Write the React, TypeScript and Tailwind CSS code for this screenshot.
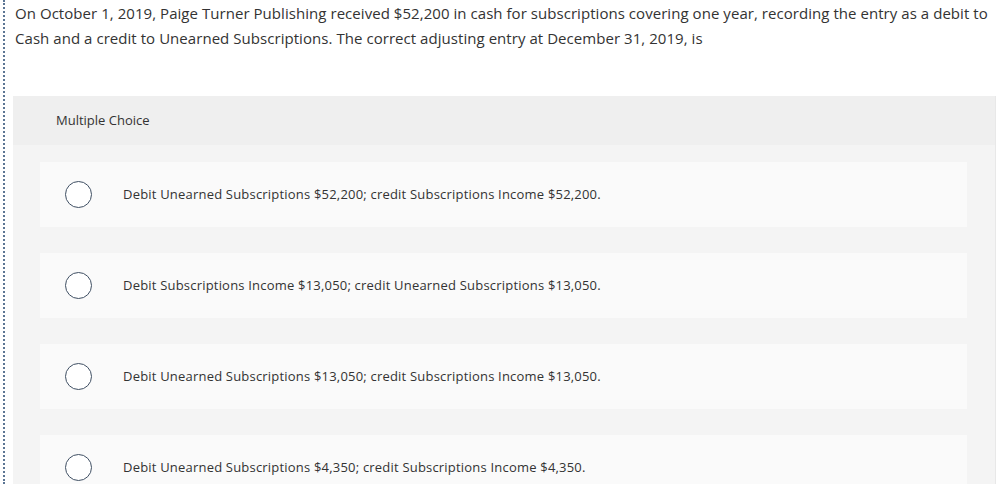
import React from 'react';

const options = [
  'Debit Unearned Subscriptions $52,200; credit Subscriptions Income $52,200.',
  'Debit Subscriptions Income $13,050; credit Unearned Subscriptions $13,050.',
  'Debit Unearned Subscriptions $13,050; credit Subscriptions Income $13,050.',
  'Debit Unearned Subscriptions $4,350; credit Subscriptions Income $4,350.',
];

export default function App() {
  return (
    <div
      className="h-[484px] w-[1004px] overflow-hidden bg-white pl-[3px]"
      style={{ fontFamily: '"Open Sans", Lato, sans-serif' }}
    >
      <div className="h-full border-l-2 border-dotted border-[#5b7594] pl-[8px] pr-[8px]">
        <p className="pt-[1px] pl-[2px] text-[15px] leading-[25px] tracking-[0.05px] text-[#333]">
          <span className="inline-block whitespace-nowrap">On October 1, 2019, Paige Turner Publishing received $52,200 in cash for subscriptions covering one year, recording the entry as a debit to</span>
          <br />
          Cash and a credit to Unearned Subscriptions. The correct adjusting entry at December 31, 2019, is
        </p>

        <div className="mt-[45px] bg-[#f4f4f4] border-r border-[#e8e8e8]">
          <div className="flex h-[49px] items-center bg-[#efefef] pl-[43px] text-[13px] text-[#333]">
            Multiple Choice
          </div>
          <div className="flex flex-col gap-[26px] pl-[27px] pr-[28px] pt-[17px]">
            {options.map((o) => (
              <div key={o} className="flex h-[65px] items-center bg-[#fafafa]">
                <span className="ml-[25px] h-[27px] w-[27px] shrink-0 rounded-full border-[1.5px] border-[#3f4f63] bg-white" />
                <span className="ml-[31px] text-[13px] tracking-[0.2px] text-[#333]">{o}</span>
              </div>
            ))}
          </div>
        </div>
      </div>
    </div>
  );
}
